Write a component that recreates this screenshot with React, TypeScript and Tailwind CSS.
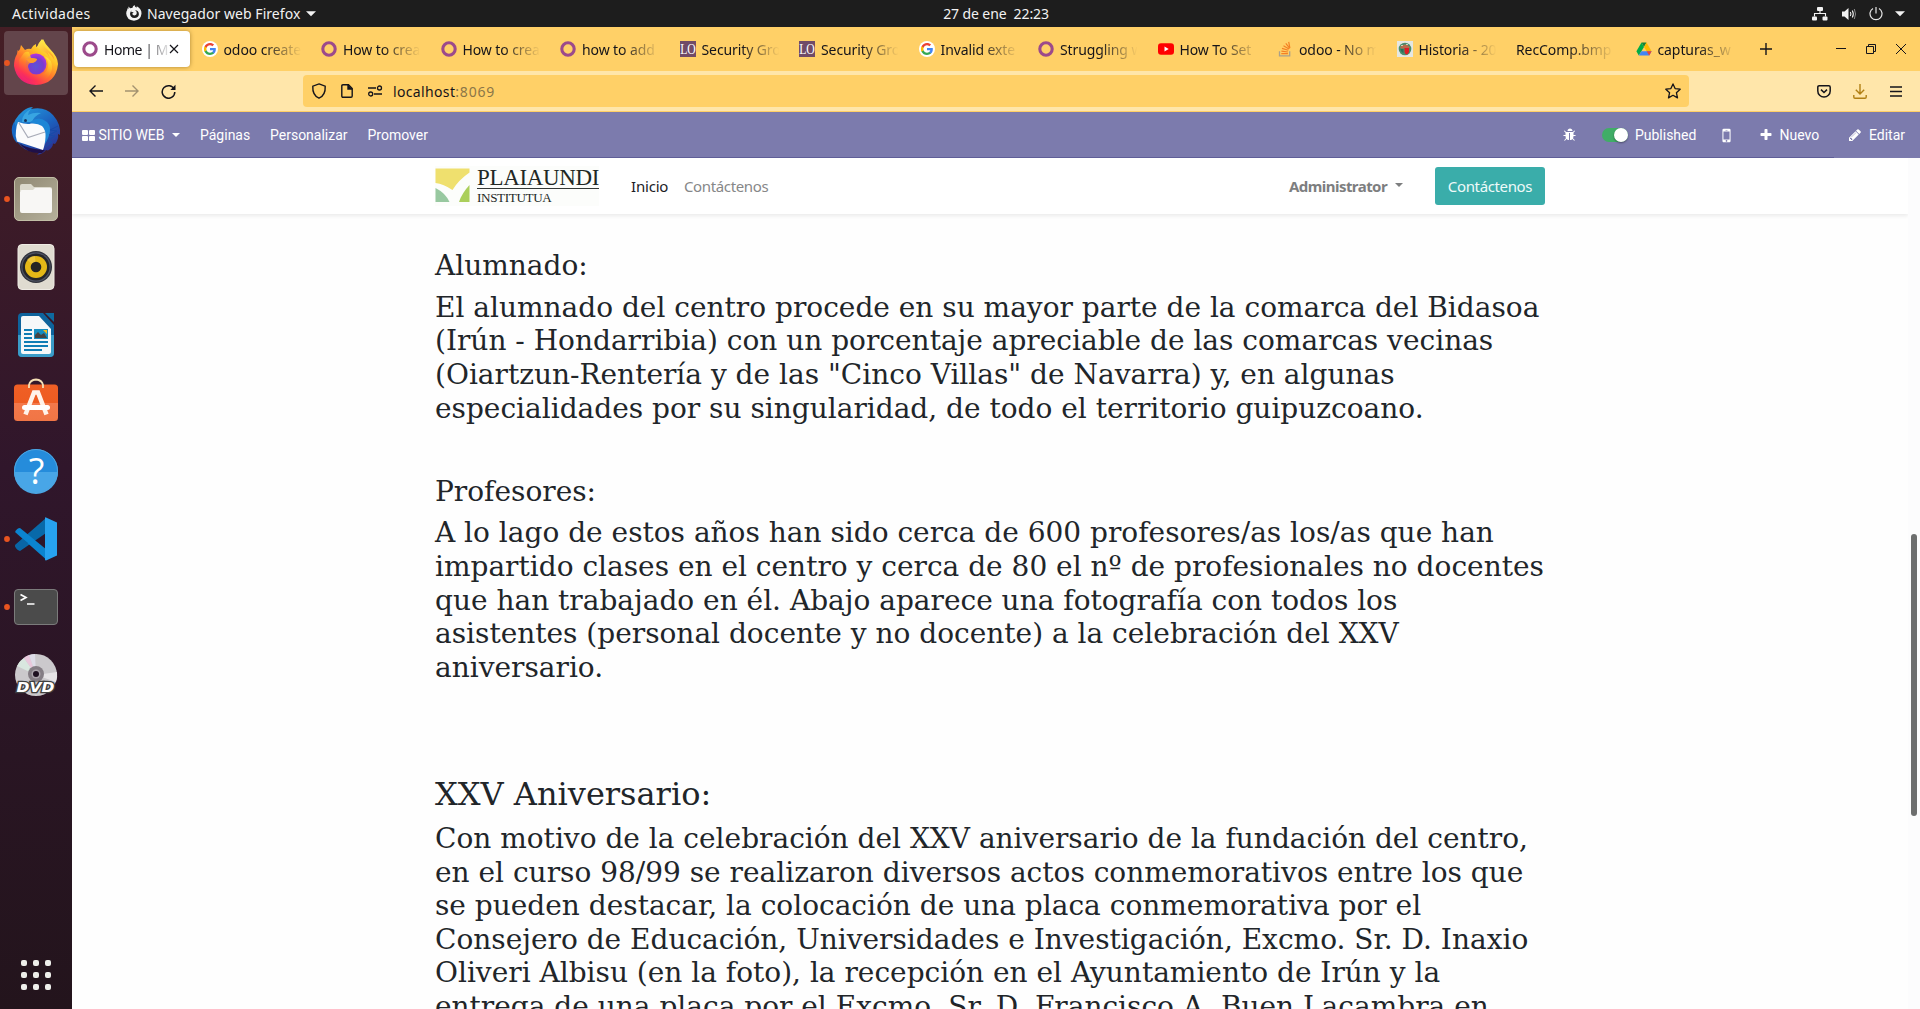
import React from "react";

const UI = "font-['Noto_Sans',sans-serif]";

function OdooRing() {
  return (
    <svg width="16" height="16" viewBox="0 0 16 16" className="shrink-0">
      <circle cx="8" cy="8" r="6.2" fill="none" stroke="#9c4a8b" strokeWidth="3.1" />
    </svg>
  );
}

function GoogleIcon() {
  return (
    <svg width="16" height="16" viewBox="0 0 16 16" className="shrink-0">
      <circle cx="8" cy="8" r="8" fill="#fff" />
      <g transform="translate(1.9 1.9) scale(0.508)">
        <path fill="#4285F4" d="M23.5 12.3c0-.8-.1-1.6-.2-2.3H12v4.5h6.5c-.3 1.500-1.200 2.800-2.400 3.600v3h3.900c2.200-2.100 3.500-5.200 3.500-8.800z" />
        <path fill="#34A853" d="M12 24c3.200 0 6-1.100 8-2.900l-3.900-3c-1.100.7-2.500 1.200-4.100 1.200-3.100 0-5.800-2.100-6.700-5H1.300v3.100C3.300 21.300 7.300 24 12 24z" />
        <path fill="#FBBC05" d="M5.300 14.300c-.2-.7-.4-1.500-.4-2.300s.1-1.600.4-2.300V6.600H1.300C.5 8.200 0 10 0 12s.5 3.800 1.300 5.400z" />
        <path fill="#EA4335" d="M12 4.800c1.800 0 3.300.6 4.600 1.800L20 3.200C18 1.200 15.200 0 12 0 7.300 0 3.300 2.700 1.300 6.600l4 3.100c.9-2.900 3.600-4.900 6.700-4.900z" />
      </g>
    </svg>
  );
}

function LoIcon() {
  return (
    <svg width="16" height="16" viewBox="0 0 16 16" className="shrink-0">
      <rect width="16" height="16" fill="#714b67" />
      <text x="0.2" y="12.800" fontFamily="Liberation Serif, serif" fontSize="14" textLength="15.600" lengthAdjust="spacingAndGlyphs" fill="#fff">LO</text>
    </svg>
  );
}

function YoutubeIcon() {
  return (
    <svg width="16" height="16" viewBox="0 0 16 16" className="shrink-0">
      <rect x="0" y="2.200" width="16" height="11.600" rx="3" fill="#f00" />
      <path d="M6.500 5.500v5l4.200-2.500z" fill="#fff" />
    </svg>
  );
}

function StackIcon() {
  return (
    <svg width="16" height="16" viewBox="0 0 16 16" fill="none" className="shrink-0">
      <path d="M2.500 10.200v4.600h10.200v-4.600" stroke="#a9a08c" strokeWidth="1.300" />
      <path d="M4.300 12.600h6.600M4.400 10.200l6.500.8M5 7.400l6.300 1.900M6.500 4.700l5.500 3.400M8.800 2.400l4 5M11.700.8l1.200 6.200" stroke="#f48024" strokeWidth="1.200" />
    </svg>
  );
}

function CrestIcon() {
  return (
    <svg width="16" height="16" viewBox="0 0 16 16" className="shrink-0">
      <rect width="16" height="16" fill="#e4e7e3" />
      <circle cx="8" cy="8" r="6.300" fill="#4a8c6c" />
      <path d="M3 6q5-5 10 0l-1 1.600H4z" fill="#b86b4b" />
      <path d="M7.500 7h4.500v4q-1 2.400-2.300 2.600-1.800-.6-2.200-2.600z" fill="#e01b24" />
      <path d="M3.500 8h3v4q-2.400-.4-3-4z" fill="#2f6f5a" />
      <path d="M4 4.500h2M9 3.500h2" stroke="#c6d8b9" />
    </svg>
  );
}

function DriveIcon() {
  return (
    <svg width="16" height="16" viewBox="0 0 16 16" className="shrink-0">
      <path d="M5.500 1.600h5L8 6z" fill="#188038" />
      <path d="M5.500 1.600L.4 10.300 2.800 14.400 8 6z" fill="#00ac47" />
      <path d="M10.500 1.600L15.600 10.300h-5L8 6z" fill="#ffba00" />
      <path d="M5.400 10.300h10.200l-2.400 4.100H2.800z" fill="#4285f4" />
      <path d="M10.600 10.300h5l-2.400 4.100z" fill="#ea4335" />
    </svg>
  );
}

const tabs: { label: string; icon: React.ReactNode }[] = [
  { label: "odoo create", icon: <GoogleIcon /> },
  { label: "How to crea", icon: <OdooRing /> },
  { label: "How to crea", icon: <OdooRing /> },
  { label: "how to add", icon: <OdooRing /> },
  { label: "Security Gro", icon: <LoIcon /> },
  { label: "Security Gro", icon: <LoIcon /> },
  { label: "Invalid exte", icon: <GoogleIcon /> },
  { label: "Struggling w", icon: <OdooRing /> },
  { label: "How To Set", icon: <YoutubeIcon /> },
  { label: "odoo - No m", icon: <StackIcon /> },
  { label: "Historia - 20", icon: <CrestIcon /> },
  { label: "RecComp.bmp", icon: null },
  { label: "capturas_w", icon: <DriveIcon /> },
];

function TopBar() {
  return (
    <div className={`${UI} grid h-[27px] shrink-0 grid-cols-[1fr_auto_1fr] items-center bg-[#1d1d1d] text-[14px] leading-[27px] whitespace-nowrap text-[#f2f2f2]`}>
      <div className="flex items-center pl-3">
        <span className="w-[113px] tracking-[0.350px]">Actividades</span>
        <svg width="18" height="18" viewBox="0 0 18 18" className="-mt-px">
          <path d="M3.500 2.500l1.600 1.700q1-.4 2.200-.2Q7.800 1.800 9.500 1q0 1.600 2 2.800l.3-1.500q5 2.800 4.700 7.500-.8 6.500-7.500 6.900Q1.700 16.200 1.200 9.500q0-2.200 1-3.600l.2-1.700 1 .7z" fill="#f2f2f2" />
          <path d="M7 6.300l-1 1.600 2.700.3-1.500 1.500q.4 1.800 2.300 1.800 2.200-.3 2.300-2.600-.1-2-1.800-2.700 3.800.2 3.900 4-.4 3.700-4.500 3.900-4.200-.4-4.400-4.400.1-2.300 2-3.400z" fill="#1d1d1d" />
        </svg>
        <span className="ml-[4px] w-[154px] tracking-[0.050px]">Navegador web Firefox</span>
        <svg width="10" height="6" viewBox="0 0 10 6" className="ml-[5px]"><path d="M0 .3h10L5 5.300z" fill="#f2f2f2" /></svg>
      </div>
      <div className="-mt-px ml-[72px] whitespace-pre tracking-[-0.1px]">27 de ene  22:23</div>
      <div className="flex items-center justify-end pr-[15px]">
        <svg width="16" height="14" viewBox="0 0 16 14" fill="#f2f2f2">
          <rect x="5" y="0" width="6" height="4" rx="1" /><rect x="0" y="9.500" width="5" height="4" rx="1" /><rect x="10.500" y="9.500" width="5" height="4" rx="1" />
          <path d="M2.500 9.500v-3h11v3M8 4v2.500" fill="none" stroke="#f2f2f2" strokeWidth="1.100" />
        </svg>
        <svg width="16" height="14" viewBox="0 0 16 14" className="ml-[13px]">
          <path d="M1 4.500h2.500L7.500 1v12l-4-3.500H1z" fill="#f2f2f2" />
          <path d="M9.300 5q1.300 2 0 4M11.300 3.500q2 3.500 0 7" fill="none" stroke="#f2f2f2" strokeWidth="1.100" />
          <path d="M13.300 2q2.500 5 0 10" fill="none" stroke="#8b8b8b" />
        </svg>
        <svg width="14" height="14" viewBox="0 0 14 14" className="ml-[12px]" fill="none" stroke="#e6e6e6" strokeWidth="1.200">
          <path d="M4 1.500a6 6 0 1 0 6 0M7 0v6.500" />
        </svg>
        <svg width="10" height="6" viewBox="0 0 10 6" className="ml-[12px]"><path d="M0 .3h10L5 5.300z" fill="#f2f2f2" /></svg>
      </div>
    </div>
  );
}

function DockSlot({ running, children }: { running?: boolean; children: React.ReactNode }) {
  return (
    <svg width="72" height="68" viewBox="0 0 72 68" className="block shrink-0">
      {running && <circle cx="7" cy="35" r="2.900" fill="#e95420" />}
      {children}
    </svg>
  );
}

function Dock() {
  return (
    <nav className="flex h-full w-[72px] shrink-0 flex-col bg-linear-to-b from-[#451e25] via-[#30162b] via-45% to-[#23141c] pt-px">
      <DockSlot>
        <defs>
          <linearGradient id="fxBody" x1="0.850" y1="0.050" x2="0.200" y2="1">
            <stop offset="0" stopColor="#fff44f" /><stop offset="0.300" stopColor="#ffc428" /><stop offset="0.550" stopColor="#ff7a2b" /><stop offset="0.800" stopColor="#ff3750" /><stop offset="1" stopColor="#e31587" />
          </linearGradient>
          <radialGradient id="fxGlobe" cx="0.500" cy="0.600" r="0.600">
            <stop offset="0" stopColor="#5b54d8" /><stop offset="0.600" stopColor="#7a3bd0" /><stop offset="1" stopColor="#b833e1" />
          </radialGradient>
          <linearGradient id="fxTail" x1="0" y1="0" x2="0.400" y2="1"><stop offset="0" stopColor="#fff44f" /><stop offset="1" stopColor="#ffa02b" /></linearGradient>
        </defs>
        <rect x="4" y="3" width="64" height="64" rx="4" fill="#63454b" />
        <circle cx="7" cy="35" r="2.900" fill="#e95420" />
        <path d="M20 21l1-4 4 5q3-2 6-1 2-4 5-5l0 3 2-1q3-5 5-7 2 5 7 10 8 8 8 15-2 20-22 21-19-1-22-19 0-7 3-12l.7-4 1 1z" fill="url(#fxBody)" />
        <path d="M37 19q2-5 5-8 0 6 5 10 7 6 7.500 11-3-5-7-8l3 8q-2-6-6-8-5-2-7.500-5z" fill="url(#fxTail)" />
        <circle cx="36" cy="36" r="10.500" fill="url(#fxGlobe)" />
        <path d="M19 32l5-7q2-2 5-1l2 6 6 1q-1 3-6 4-3 0-3 4 2 8 9 8 9 0 11-8 1-7-4-11 9 3 8 13-3 13-16 13-14-1-17-15z" fill="url(#fxBody)" opacity="0.850" />
        <path d="M26 31q5-2 11 0-1 4-6 4-3-1-5-4z" fill="#ff9a29" />
      </DockSlot>
      <DockSlot>
        <defs>
          <linearGradient id="tb" x1="0.200" y1="0" x2="0.800" y2="1"><stop offset="0" stopColor="#2398dc" /><stop offset="0.500" stopColor="#1c5fbd" /><stop offset="1" stopColor="#2d2a8c" /></linearGradient>
        </defs>
        <path d="M23 15q5-4 10-4l-2 2q14-3 22 6 8 9 7 20l-2-1q1 5-3 10l-2-.5q0 4-5 7l-2-.5q-3 4-9 5l3-3q-12 1-19-6-8-7-8-17 0-10 10-18z" fill="url(#tb)" />
        <path d="M19 47q8 6 26 7l-3 3q-15 1-23-10z" fill="#1f1048" />
        <path d="M12 37q-1-6 2-11 2 6 5 9l-2 12q-4-4-5-10z" fill="#1668c4" />
        <path d="M22 26q0-9 9-13-3 3-3 6 6-3 13-2-7 3-9 9z" fill="#38a5e2" />
        <path d="M30 26q9-7 17 0 7 7-2 22-1-8-4-14-5-6-11-8z" fill="#1d86d6" />
        <path d="M18 26q9 3 13 1.500 7-.5 11 2.500 4 4 3.500 11-.5 8-2.500 13l-26-8.500q-2-6-1-11 .5-5 2-8.500z" fill="#fbfbfc" />
        <path d="M19 27l9 14.500 17-5.500" fill="none" stroke="#a9acb8" strokeWidth="1.200" />
        <path d="M58 30l-8 4 7 1-8 4 6 1-8 5 5 1-7 5" stroke="#174aa8" fill="none" />
        <circle cx="25.500" cy="24.500" r="1.500" fill="#17345e" />
      </DockSlot>
      <DockSlot running>
        <defs><linearGradient id="fl" x1="0" y1="0" x2="1" y2="1"><stop offset="0" stopColor="#8f8872" /><stop offset="1" stopColor="#b5b09b" /></linearGradient></defs>
        <rect x="14.500" y="13.500" width="43" height="43" rx="4.500" fill="url(#fl)" stroke="#c2bea6" />
        <path d="M20 27v-5q0-2 2-2h9l3 3h16q2 0 2 2v5z" fill="#dcdacd" />
        <path d="M20 28q0-2 2-2h11l2-2h15q2 0 2 2v21q0 2-2 2H22q-2 0-2-2z" fill="#f8f7f5" />
      </DockSlot>
      <DockSlot>
        <rect x="18" y="12.500" width="36" height="45" rx="4" fill="#dfdbd0" stroke="#eeebe4" />
        <circle cx="36" cy="35" r="16" fill="#30323a" /><circle cx="36" cy="35" r="14.700" fill="#4d5262" /><circle cx="36" cy="35" r="13.500" fill="#252629" />
        <circle cx="36" cy="35" r="11" fill="#e4b817" />
        <path d="M36 35L27 28a11 11 0 0 1 8-4z" fill="#f3cf55" opacity="0.600" />
        <circle cx="36" cy="35" r="5.300" fill="#242424" />
      </DockSlot>
      <DockSlot>
        <path d="M22 13h21l11 12v28q0 4-4 4H22q-4 0-4-4V17q0-4 4-4z" fill="#0e639c" />
        <path d="M18 35h36v18q0 4-4 4H22q-4 0-4-4z" fill="#3a9cc8" />
        <path d="M45 13h9v9z" fill="#0e6aa0" />
        <path d="M23 16h16l12 13v23q0 2-2 2H23q-2 0-2-2V18q0-2 2-2z" fill="#f6f8f9" />
        <path d="M24 30h8M24 34h8M24 38h8M24 42h24M24 46h24M24 50h18" stroke="#0f7db5" strokeWidth="2" />
        <rect x="34" y="29" width="14" height="10" fill="#168dbf" />
        <path d="M35 38v-3l3-3 3 3 3-2 3 5z" fill="#444" /><path d="M43 30h4v4z" fill="#f5bd1f" />
      </DockSlot>
      <DockSlot>
        <defs><linearGradient id="sw" x1="0" y1="0" x2="0" y2="1"><stop offset="0" stopColor="#f05f25" /><stop offset="0.500" stopColor="#ee5c22" /><stop offset="0.500" stopColor="#f4794b" /><stop offset="1" stopColor="#f07545" /></linearGradient></defs>
        <rect x="14" y="16.500" width="44" height="36.500" rx="3.500" fill="url(#sw)" />
        <path d="M29 20v-3q1-5 7-5.500 6 .5 7 5.500v3" fill="none" stroke="#f5dfb5" strokeWidth="1.800" />
        <path d="M25.500 46.500L34 24.500h4l8.500 22" fill="none" stroke="#fff3ea" strokeWidth="4.500" />
        <rect x="22" y="37" width="28" height="5" rx="2.500" fill="#fff" />
      </DockSlot>
      <DockSlot>
        <circle cx="36" cy="35" r="22" fill="#258cdb" />
        <path d="M14 36a22 22 0 0 0 44 0z" fill="#48a6e7" />
        <circle cx="36" cy="35" r="21.500" fill="none" stroke="#4ea5df" />
        <text x="36.500" y="48" textAnchor="middle" fontFamily="Open Sans, sans-serif" fontSize="36" fill="#fff">?</text>
      </DockSlot>
      <DockSlot running>
        <path d="M15 41l31-27 3 13-29 20q-5-2-5-6z" fill="#0869a9" />
        <path d="M15 28q2-4 5-4l27 22 1 9-3-.5z" fill="#0b84cf" />
        <path d="M46 13.500l11 5v33l-11 5q-1 0-1-1V14q0-1 1-.5z" fill="#27a2ef" />
        <path d="M15 42l8-7 5 4-8 7q-3-1-5-4z" fill="#0a65a5" />
      </DockSlot>
      <DockSlot running>
        <rect x="14.500" y="17.500" width="43" height="35" rx="3.500" fill="#4b4b4b" stroke="#7b7b7b" />
        <path d="M20.500 22.500l5.500 3-5.500 3" fill="none" stroke="#fff" strokeWidth="1.700" />
        <path d="M27 32h7.500" stroke="#fff" strokeWidth="1.500" />
      </DockSlot>
      <DockSlot>
        <circle cx="36" cy="35" r="21" fill="#cbc9cc" />
        <path d="M36 35L17 26a21 21 0 0 1 7-8z" fill="#d9e7df" /><path d="M36 35L24 18a21 21 0 0 1 5-3z" fill="#e9c8dc" /><path d="M36 35L29 15a21 21 0 0 1 6-1z" fill="#dedde8" /><path d="M36 35l21-3a21 21 0 0 1-1 10z" fill="#e6e4e6" />
        <circle cx="36" cy="34" r="8" fill="#847d84" /><circle cx="36" cy="34" r="4.500" fill="#aaa3aa" /><circle cx="36" cy="34" r="3" fill="#1e1020" />
        <text x="16.500" y="51.500" fontFamily="DejaVu Sans, sans-serif" fontStyle="italic" fontWeight="bold" fontSize="13.500" textLength="38" lengthAdjust="spacingAndGlyphs" fill="#fff" stroke="#3f403f" strokeWidth="2.600" paintOrder="stroke">DVD</text>
      </DockSlot>
      <div className="mt-auto grid grid-cols-[repeat(3,6px)] justify-center gap-[6px] pb-[19px]">
        {Array.from({ length: 9 }, (_, i) => <span key={i} className="size-[6px] rounded-[2px] bg-[#eeeeea]" />)}
      </div>
    </nav>
  );
}

const fade = "[mask-image:linear-gradient(to_right,#000_50%,transparent_98%)]";

function TabStrip() {
  return (
    <div className={`${UI} flex h-[44px] shrink-0 items-center bg-[#ffd067] text-[14px] leading-5 text-[#15141a]`}>
      <div className="flex w-[119.500px] shrink-0 pl-[2px]">
        <div className="flex h-[36px] w-[116px] items-center rounded-[4px] bg-white pl-2 shadow-[0_0_4px_rgba(90,60,0,0.500)]">
          <OdooRing />
          <div className="mt-px ml-[6px] w-[64px] overflow-hidden tracking-[-0.450px] whitespace-nowrap [mask-image:linear-gradient(to_right,#000_60%,transparent_105%)]">Home | M</div>
          <svg width="10" height="10" viewBox="0 0 10 10" className="ml-[1px]"><path d="M1 1l8 8M9 1L1 9" stroke="#15141a" strokeWidth="1.200" /></svg>
        </div>
      </div>
      {tabs.map((t, i) => (
        <div key={i} className="flex w-[119.500px] shrink-0 items-center gap-[6px] pl-[10px]">
          {t.icon}
          <div className={`${fade} ${t.icon ? "w-[79px]" : "w-[100px]"} mt-px overflow-hidden tracking-[-0.1px] whitespace-nowrap`}>{t.label}</div>
        </div>
      ))}
      <svg width="12" height="12" viewBox="0 0 12 12" className="ml-[15px]"><path d="M6 0v12M0 6h12" stroke="#15141a" strokeWidth="1.400" /></svg>
      <div className="ml-auto flex items-center gap-[20px] pr-[14px]">
        <svg width="10" height="10" viewBox="0 0 10 10"><path d="M0 4.500h10" stroke="#15141a" /></svg>
        <svg width="10" height="10" viewBox="0 0 10 10" fill="none" stroke="#15141a"><path d="M.5 2.500h7v7h-7zM2.500 2.500v-2h7v7h-2" /></svg>
        <svg width="10" height="10" viewBox="0 0 10 10"><path d="M0 0l10 10M10 0L0 10" stroke="#15141a" /></svg>
      </div>
    </div>
  );
}

function NavBar() {
  return (
    <div className={`${UI} flex h-[41px] shrink-0 items-center border-b border-[#ffd067] bg-[#ffe6aa] text-[14px]`}>
      <svg width="14" height="12" viewBox="0 0 14 12" className="ml-[17px]" fill="none" stroke="#15141a" strokeWidth="1.400"><path d="M14 6H1M6.500.5L1 6l5.500 5.500" /></svg>
      <svg width="14" height="12" viewBox="0 0 14 12" className="ml-[22px]" fill="none" stroke="#a49270" strokeWidth="1.400"><path d="M0 6h13M7.500.5L13 6l-5.500 5.500" /></svg>
      <svg width="15" height="15" viewBox="0 0 15 15" className="ml-[22px]" fill="none" stroke="#15141a" strokeWidth="1.500"><path d="M13.300 5.500A6.300 6.300 0 1 0 13.800 8" /><path d="M14.500 .8V6H9.300z" fill="#15141a" stroke="none" /></svg>
      <div className="ml-[127px] flex h-[32px] w-[1386px] items-center rounded-[4px] bg-[#ffd067] px-2">
        <svg width="16" height="16" viewBox="0 0 16 16" fill="none" stroke="#15141a" strokeWidth="1.400"><path d="M8 .9l6.200 2.300q.5 9-6.200 12Q1.300 12.200 1.800 3.200z" /></svg>
        <svg width="12" height="14" viewBox="0 0 12 14" className="ml-[14px]" fill="none" stroke="#15141a" strokeWidth="1.400"><path d="M2 .8h5.500l3.700 3.700v7.500q0 1.200-1.200 1.200H2Q.8 13.200.8 12V2Q.8.8 2 .8z" /><path d="M7 .8v4.200h4.200" fill="#15141a" /></svg>
        <svg width="15" height="12" viewBox="0 0 15 12" className="ml-[15px]" fill="none" stroke="#15141a" strokeWidth="1.300"><path d="M0 3h8M6 9h8" /><circle cx="11.500" cy="3" r="2" /><circle cx="2.700" cy="9" r="2" /></svg>
        <span className="ml-[10px] tracking-[0.350px] text-[#15141a]">localhost<span className="tracking-[0.800px] text-[#8b7648]">:8069</span></span>
        <svg width="16" height="16" viewBox="0 0 16 16" className="ml-auto" fill="none" stroke="#15141a" strokeWidth="1.300" strokeLinejoin="round"><path d="M8 .9l2.100 4.700 5.100.6-3.800 3.500 1.100 5.200L8 12.300l-4.500 2.600 1.100-5.200L.8 6.200l5.100-.6z" /></svg>
      </div>
      <div className="ml-auto flex items-center pr-[18px]">
        <svg width="14" height="13" viewBox="0 0 14 13" fill="none" stroke="#15141a" strokeWidth="1.500"><path d="M2.200.8h9.600q1.400 0 1.400 1.400v3.700a6.200 6.200 0 0 1-12.400 0V2.200Q.8.8 2.200.8z" /><path d="M4 4.600l3 2.900 3-2.900" /></svg>
        <svg width="14" height="15" viewBox="0 0 14 15" className="ml-[22px]" fill="none" stroke="#b17f13" strokeWidth="1.400"><path d="M7 0v10M2.800 5.800L7 10l4.200-4.200M.8 11v2q0 1.200 1.200 1.200h10q1.200 0 1.200-1.200v-2" /></svg>
        <svg width="12" height="11" viewBox="0 0 12 11" className="ml-[23px]"><path d="M0 1h12M0 5.500h12M0 10h12" stroke="#15141a" strokeWidth="1.500" /></svg>
      </div>
    </div>
  );
}

function Fa({ d, size, className }: { d: string; size: number; className?: string }) {
  return <svg width={size} height={size} viewBox="0 0 1792 1792" className={className} fill="currentColor"><path d={d} /></svg>;
}
const BUG = "M1632 960q0 26-19 45t-45 19h-224q0 171-67 290l208 209q19 19 19 45t-19 45q-18 19-45 19t-45-19l-198-197q-5 5-15 13t-42 28.500-65 36.500-82 29-97 13v-896h-128v896q-51 0-101.500-13.500t-87-33-66-39-43.500-32.500l-15-14-183 207q-20 21-48 21-24 0-43-16-19-18-20.500-44.500t15.500-46.500l202-227q-58-114-58-274h-224q-26 0-45-19t-19-45 19-45 45-19h224v-294l-173-173q-19-19-19-45t19-45 45-19 45 19l173 173h844l173-173q19-19 45-19t45 19 19 45-19 45l-173 173v294h224q26 0 45 19t19 45zm-416-576h-640q0-133 93.500-226.500t226.500-93.500 226.500 93.500 93.500 226.500z";
const PENCIL = "M491 1536l91-91-235-235-91 91v107h128v128h107zm523-928q0-22-22-22-10 0-17 7l-542 542q-7 7-7 17 0 22 22 22 10 0 17-7l542-542q7-7 7-17zm-54-192l416 416-832 832h-416v-416zm683 96q0 53-37 90l-166 166-416-416 166-165q36-38 90-38 53 0 91 38l235 234q37 39 37 91z";
const PLUS = "M1600 736v192q0 40-28 68t-68 28h-416v416q0 40-28 68t-68 28h-192q-40 0-68-28t-28-68v-416h-416q-40 0-68-28t-28-68v-192q0-40 28-68t68-28h416v-416q0-40 28-68t68-28h192q40 0 68 28t28 68v416h416q40 0 68 28t28 68z";
const MOBILE = "M976 1408q0-33-23.500-56.500t-56.500-23.500-56.500 23.500-23.500 56.500 23.500 56.500 56.500 23.500 56.500-23.500 23.500-56.500zm208-160v-704q0-13-9.500-22.500t-22.500-9.500h-512q-13 0-22.500 9.500t-9.500 22.500v704q0 13 9.500 22.500t22.500 9.500h512q13 0 22.500-9.500t9.500-22.500zm-192-848q0-16-16-16h-160q-16 0-16 16t16 16h160q16 0 16-16zm288-16v1024q0 52-38 90t-90 38h-512q-52 0-90-38t-38-90v-1024q0-52 38-90t90-38h512q52 0 90 38t38 90z";

function OdooBar() {
  return (
    <div className="relative flex h-[46px] shrink-0 items-center bg-[#7c7bad] font-[Roboto,sans-serif] text-[14px] text-white">
      <div className="absolute bottom-0 left-0 h-px w-[1762px] bg-[#5f5e97]" />
      <svg width="13" height="11" viewBox="0 0 13 11" className="ml-[10px]" fill="#fff"><rect width="6" height="5" rx="1" /><rect x="7" width="6" height="5" rx="1" /><rect y="6" width="6" height="5" rx="1" /><rect x="7" y="6" width="6" height="5" rx="1" /></svg>
      <span className="ml-[3.500px] w-[66px] whitespace-nowrap tracking-[-0.050px]">SITIO WEB</span>
      <svg width="8" height="4" viewBox="0 0 8 4" className="ml-[7.500px] -mt-px"><path d="M0 0h8L4 4z" fill="#fff" /></svg>
      <span className="ml-[20px] w-[50px]">Páginas</span>
      <span className="ml-[20px] w-[78px]">Personalizar</span>
      <span className="ml-[19.500px]">Promover</span>
      <div className="ml-auto flex items-center pr-[15px]">
        <Fa d={BUG} size={14} />
        <span className="ml-[25px] flex h-[14px] w-[26px] justify-end rounded-full bg-[#40ad67]"><span className="size-[14px] rounded-full bg-white shadow-[0_1px_2px_rgba(0,0,0,0.400)]" /></span>
        <span className="ml-[7px] w-[61px]">Published</span>
        <Fa d={MOBILE} size={19} className="ml-[21px]" />
        <Fa d={PLUS} size={14} className="ml-[23.500px]" />
        <span className="ml-[6px] w-[39px]">Nuevo</span>
        <Fa d={PENCIL} size={14} className="ml-[29.500px]" />
        <span className="ml-[7px]">Editar</span>
      </div>
    </div>
  );
}

function SiteLogo() {
  return (
    <svg width="164" height="40" viewBox="0 0 164 40" className="shrink-0">
      <rect width="164" height="40" fill="#fcfdfb" />
      <path d="M.5 2.500h34v4Q23.500 14 17.500 24 8.500 18 .5 17z" fill="#efe06e" />
      <path d="M.5 22q10 5 14 14H.5z" fill="#98c8a0" />
      <path d="M34.500 19v17H24q3-9 10.500-17z" fill="#abcf5b" />
      <g fontFamily="Liberation Serif, serif" fill="#222825">
        <text x="42" y="18.500" fontSize="24" textLength="122" lengthAdjust="spacingAndGlyphs">PLAIAUNDI</text>
        <text x="42" y="36" fontSize="13.500" textLength="74.500" lengthAdjust="spacingAndGlyphs">INSTITUTUA</text>
      </g>
      <path d="M42 22.500h122" stroke="#333836" strokeWidth="1" />
    </svg>
  );
}

function SiteHeader() {
  return (
    <header className={`${UI} flex h-[56px] w-[1836px] shrink-0 items-center bg-white text-[15px] tracking-[-0.360px] shadow-[0_2px_4px_rgba(0,0,0,0.080)]`}>
      <div className="ml-[363px] flex w-[1110px] items-center">
        <SiteLogo />
        <span className="ml-[32px] w-[37px] tracking-[-0.2px] text-[#1b1b1f]">Inicio</span>
        <span className="ml-[16px] text-[#868788]">Contáctenos</span>
        <span className="ml-auto w-[98px] text-[15px] font-bold tracking-[-0.550px] text-[#7d7e7f]">Administrator</span>
        <svg width="8" height="4" viewBox="0 0 8 4" className="ml-[8px] -mt-[3px]"><path d="M0 0h8L4 4z" fill="#7d7e7f" /></svg>
        <span className="ml-[32px] flex h-[38px] w-[110px] items-center justify-center rounded-[3px] bg-[#3aadaa] text-[#eefaf9]">Contáctenos</span>
      </div>
    </header>
  );
}

function Lines({ lines }: { lines: string[] }) {
  return (
    <p className="mt-2 whitespace-nowrap">
      {lines.map((l) => <span key={l} className="block">{l}</span>)}
    </p>
  );
}

function Article() {
  return (
    <main className="ml-[363px] w-[1110px] pt-[35.250px] font-['DejaVu_Serif',serif] text-[28px] leading-[33.600px] text-[#212529]">
      <h3>Alumnado:</h3>
      <Lines lines={[
        "El alumnado del centro procede en su mayor parte de la comarca del Bidasoa",
        "(Irún - Hondarribia) con un porcentaje apreciable de las comarcas vecinas",
        "(Oiartzun-Rentería y de las \"Cinco Villas\" de Navarra) y, en algunas",
        "especialidades por su singularidad, de todo el territorio guipuzcoano.",
      ]} />
      <h3 className="mt-[49.600px]">Profesores:</h3>
      <Lines lines={[
        "A lo lago de estos años han sido cerca de 600 profesores/as los/as que han",
        "impartido clases en el centro y cerca de 80 el nº de profesionales no docentes",
        "que han trabajado en él. Abajo aparece una fotografía con todos los",
        "asistentes (personal docente y no docente) a la celebración del XXV",
        "aniversario.",
      ]} />
      <h2 className="mt-[90.700px] pb-[0.500px] text-[32px] leading-[38.400px]">XXV Aniversario:</h2>
      <Lines lines={[
        "Con motivo de la celebración del XXV aniversario de la fundación del centro,",
        "en el curso 98/99 se realizaron diversos actos conmemorativos entre los que",
        "se pueden destacar, la colocación de una placa conmemorativa por el",
        "Consejero de Educación, Universidades e Investigación, Excmo. Sr. D. Inaxio",
        "Oliveri Albisu (en la foto), la recepción en el Ayuntamiento de Irún y la",
        "entrega de una placa por el Excmo. Sr. D. Francisco A. Buen Lacambra en",
      ]} />
    </main>
  );
}

export default function App() {
  return (
    <div className="flex h-[1009px] w-[1920px] flex-col overflow-hidden">
      <TopBar />
      <div className="flex h-[982px]">
        <Dock />
        <div className="flex h-full w-[1848px] flex-col overflow-hidden bg-[#fefefe]">
          <TabStrip />
          <NavBar />
          <OdooBar />
          <div className="relative h-[851px] shrink-0 overflow-hidden">
            <SiteHeader />
            <Article />
            <div className="absolute top-0 right-0 h-full w-[12px] bg-[#fcfcfd]">
              <div className="mt-[376px] ml-[3px] h-[282px] w-[6px] rounded-full bg-[#6d6e6e]" />
            </div>
          </div>
        </div>
      </div>
    </div>
  );
}
